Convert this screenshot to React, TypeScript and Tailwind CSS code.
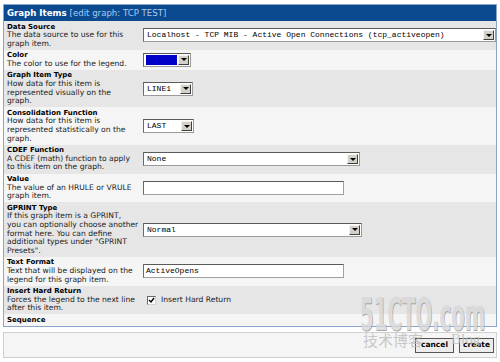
import type { ReactNode } from "react";

function Arrow() {
  return (
    <div className="flex w-[11px] items-center justify-center border border-t-[#f4f4f4] border-l-[#f4f4f4] border-b-[#404040] border-r-[#404040] bg-[#d4d0c8]">
      <div className="h-0 w-0 border-x-[3px] border-t-[3px] border-x-transparent border-t-black" />
    </div>
  );
}

function Select({ width, children }: { width: string; children: ReactNode }) {
  return (
    <div className={`flex h-[14px] items-stretch border border-[#9a9a9a] border-t-[#5a5a5a] border-l-[#6a6a6a] bg-white p-[1px] ${width}`}>
      <div className="flex flex-1 items-center overflow-hidden whitespace-nowrap pl-[2px] font-['Liberation_Mono',monospace] text-[8px] leading-none text-black">
        {children}
      </div>
      <Arrow />
    </div>
  );
}

function TextBox({ value }: { value?: string }) {
  return (
    <div className="flex h-[14px] w-[201px] items-center border border-[#a0a0a0] border-t-[#5a5a5a] border-l-[#6a6a6a] bg-white pl-[2px] font-['Liberation_Mono',monospace] text-[8px] leading-none text-black">
      {value}
    </div>
  );
}

type Row = { title: string; lines: string[]; control?: ReactNode };

const rows: Row[] = [
  {
    title: "Data Source",
    lines: ["The data source to use for this", "graph item."],
    control: (
      <Select width="w-[353px]">Localhost - TCP MIB - Active Open Connections (tcp_activeopen)</Select>
    ),
  },
  {
    title: "Color",
    lines: ["The color to use for the legend."],
    control: (
      <Select width="w-[48px]">
        <div className="ml-[-1px] h-[10px] w-[31px] bg-[#0000c8]" />
      </Select>
    ),
  },
  {
    title: "Graph Item Type",
    lines: ["How data for this item is", "represented visually on the", "graph."],
    control: <Select width="w-[50px]">LINE1</Select>,
  },
  {
    title: "Consolidation Function",
    lines: ["How data for this item is", "represented statistically on the", "graph."],
    control: <Select width="w-[51px]">LAST</Select>,
  },
  {
    title: "CDEF Function",
    lines: ["A CDEF (math) function to apply", "to this item on the graph."],
    control: <Select width="w-[217px]">None</Select>,
  },
  {
    title: "Value",
    lines: ["The value of an HRULE or VRULE", "graph item."],
    control: <TextBox />,
  },
  {
    title: "GPRINT Type",
    lines: [
      "If this graph item is a GPRINT,",
      "you can optionally choose another",
      "format here. You can define",
      "additional types under \"GPRINT",
      "Presets\".",
    ],
    control: <Select width="w-[219px]">Normal</Select>,
  },
  {
    title: "Text Format",
    lines: ["Text that will be displayed on the", "legend for this graph item."],
    control: <TextBox value="ActiveOpens" />,
  },
  {
    title: "Insert Hard Return",
    lines: ["Forces the legend to the next line", "after this item."],
    control: (
      <div className="flex items-center gap-[5px] pl-[4px]">
        <div className="flex h-[9px] w-[9px] items-center justify-center border border-[#6a6a6a] border-b-[#d0d0d0] border-r-[#d0d0d0] bg-white">
          <svg width="7" height="7" viewBox="0 0 7 7">
            <path d="M1 3 L3 5 L6 1" stroke="#000" strokeWidth="1.4" fill="none" />
          </svg>
        </div>
        <span className="text-[7.6px] leading-none text-[#222]">Insert Hard Return</span>
      </div>
    ),
  },
  { title: "Sequence", lines: [] },
];

export default function App() {
  return (
    <div className="relative h-[362px] w-[500px] overflow-hidden bg-white font-['DejaVu_Sans',Verdana,sans-serif] text-black">
      <div className="mx-[3px] mt-[4px] border border-[#8aa6cc]">
        {/* header */}
        <div className="flex h-[16px] items-center gap-[3px] bg-[#0c4a90] pl-[3px] text-[8.6px] leading-none">
          <span className="font-bold text-white">Graph Items</span>
          <span className="text-[#a8caf0]">[edit graph: TCP TEST]</span>
        </div>

        {rows.map((r, i) => (
          <div
            key={r.title}
            className={`flex items-center py-[1.5px] ${i % 2 === 0 ? "bg-[#e6e6e6]" : "bg-[#f5f5f5]"}`}
          >
            <div className="w-[139px] shrink-0 pl-[3px] leading-[8.6px]">
              <div className="text-[7px] font-bold">{r.title}</div>
              {r.lines.map((l) => (
                <div key={l} className="whitespace-nowrap text-[7.6px] text-[#222]">
                  {l}
                </div>
              ))}
            </div>
            <div className="flex-1">{r.control}</div>
          </div>
        ))}
      </div>

      {/* action bar */}
      <div className="mx-[3px] mt-[5px] flex h-[26px] items-center justify-end gap-[5px] border border-[#cfcfcf] bg-[#f5f5f5] pr-[2px]">
        <button className="h-[15px] w-[39px] border border-[#555] bg-[#ececec] text-[7.5px] font-bold leading-none text-black">
          cancel
        </button>
        <button className="h-[15px] w-[35px] border border-[#555] bg-[#ececec] text-[7.5px] font-bold leading-none text-black">
          create
        </button>
      </div>

      {/* watermark */}
      <div className="pointer-events-none absolute left-[360px] top-[293px] opacity-80">
        <div className="origin-left whitespace-nowrap font-['DejaVu_Sans',sans-serif] text-[44px] font-bold leading-none text-[#d8d8d8] [transform:scaleX(0.45)] [text-shadow:1px_1px_0_#8f8f8f]">
          51CTO.com
        </div>
        <div className="mt-[-5px] flex items-end gap-[28px] pl-[3px]">
          <span className="font-['Noto_Sans_CJK_SC',sans-serif] text-[15px] leading-none text-[#bcbcbc]">技术博客</span>
          <span className="font-['Liberation_Serif',serif] text-[15px] leading-none text-[#bcbcbc]">Blog</span>
        </div>
      </div>
    </div>
  );
}
